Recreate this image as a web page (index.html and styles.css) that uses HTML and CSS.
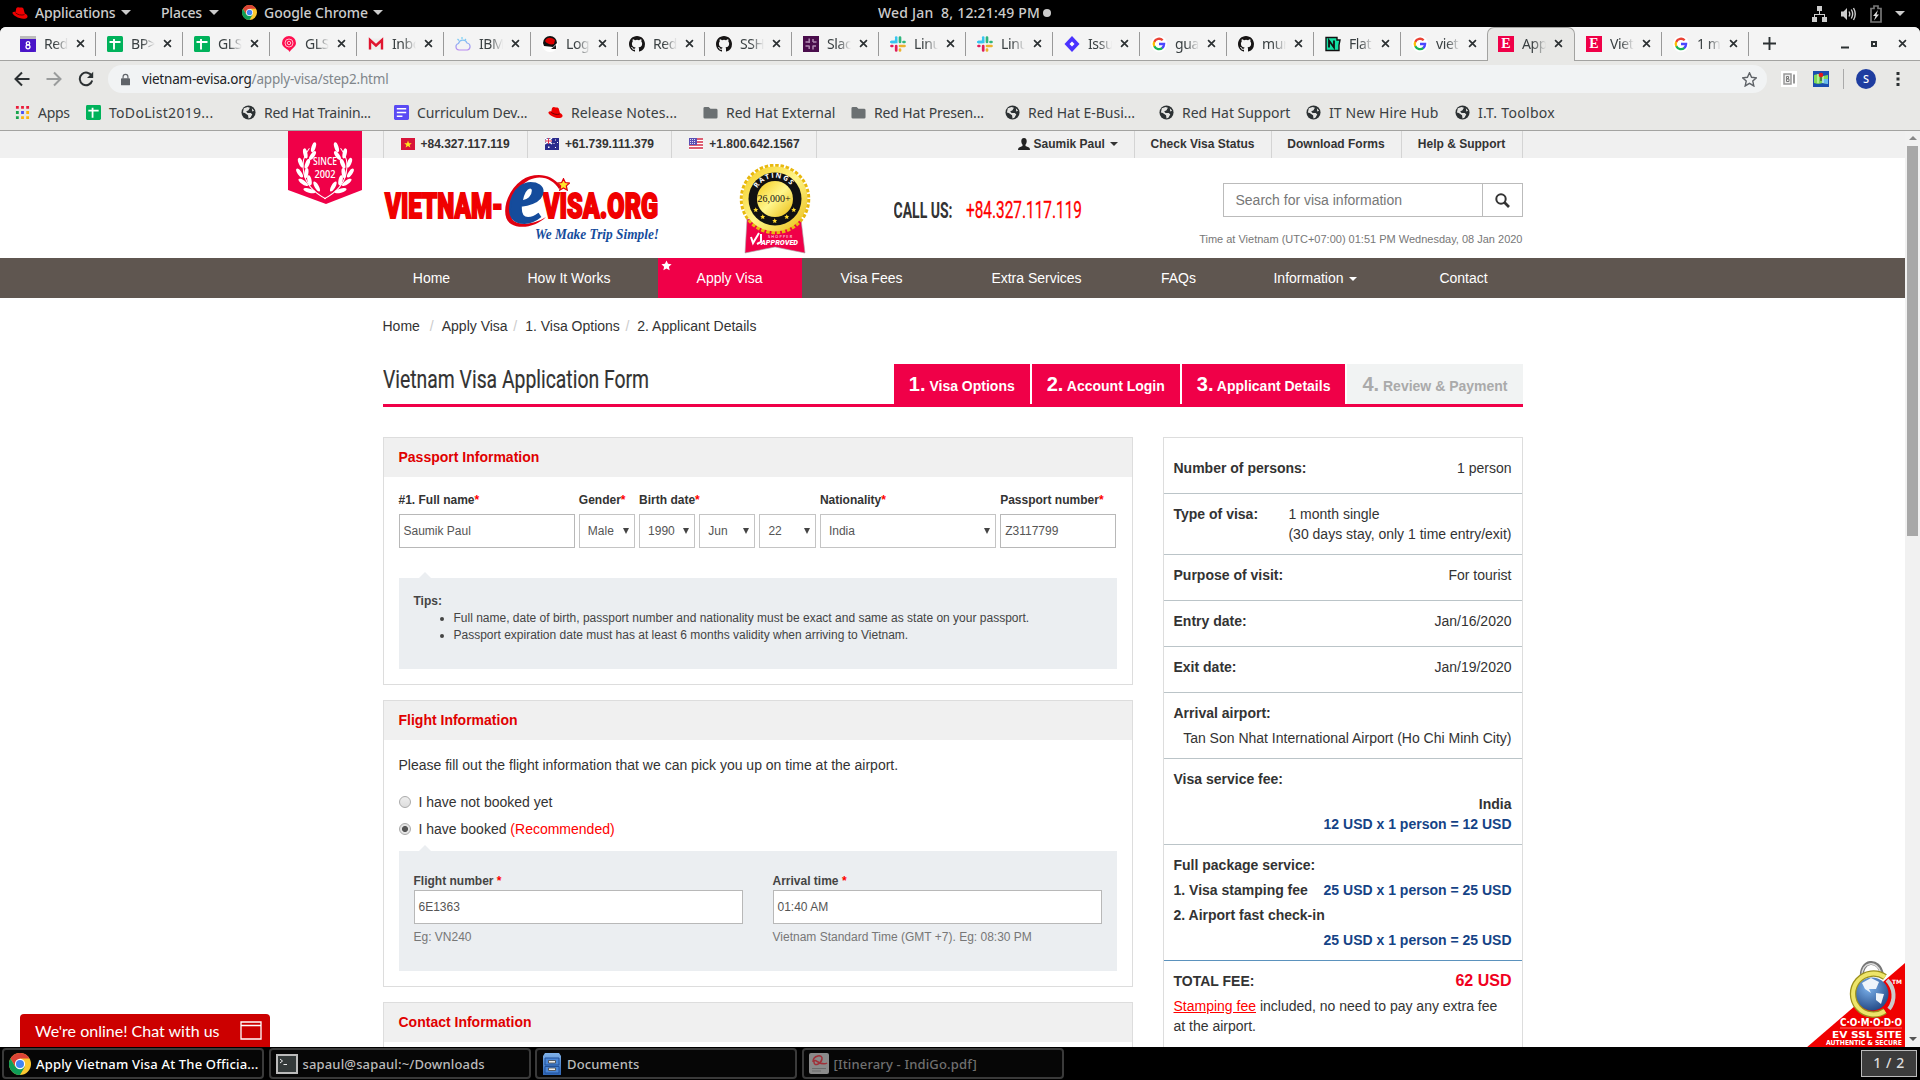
FILE: index.html
```html
<!DOCTYPE html>
<html lang="en">
<head>
<meta charset="utf-8">
<title>Apply Vietnam Visa At The Official Site</title>
<link rel="stylesheet" href="styles.css">
</head>
<body>
<svg class="defs" width="0" height="0" aria-hidden="true">
  <defs>
    <linearGradient id="gold" x1="0" y1="0" x2="1" y2="1"><stop offset="0" stop-color="#f4cb1c"/><stop offset=".5" stop-color="#fff68c"/><stop offset="1" stop-color="#e9b90c"/></linearGradient>
    <linearGradient id="cab" x1="0" y1="0" x2="0" y2="1"><stop offset="0" stop-color="#7fb2ea"/><stop offset="1" stop-color="#2e65b4"/></linearGradient>
    <linearGradient id="rb" x1="0" y1="0" x2="0" y2="1"><stop offset="0" stop-color="#6fd6f5"/><stop offset="1" stop-color="#b98af0"/></linearGradient>
    <radialGradient id="globeg" cx=".4" cy=".3" r=".8"><stop offset="0" stop-color="#7db4ee"/><stop offset="1" stop-color="#1c3f7c"/></radialGradient>
    <symbol id="i-chrome" viewBox="0 0 24 24"><circle cx="12" cy="12" r="12" fill="#fbc831"/><path d="M1.6 6A12 12 0 0 1 22.4 6H12L7 15Z" fill="#db4437"/><path d="M1.6 6A12 12 0 0 0 12 24L17.2 15 12 12 6.8 15Z" fill="#0f9d58"/><circle cx="12" cy="12" r="5.6" fill="#fff"/><circle cx="12" cy="12" r="4.4" fill="#4285f4"/></symbol>
    <symbol id="i-hat" viewBox="0 0 16 16"><path d="M4.3 3.2C6 1.4 7 2.6 8.300 2.600S10.500 2.200 11.400 3.600L12.800 8.400C15 9.400 16 10.800 15.400 12.200 14 14.800 7.600 14 4 11.600 1.600 10.200 0 8.600.5 7.600 1 6.700 2.400 6.600 3.500 6.900Z" fill="#e00"/><path d="M3.400 7.600C5 9.600 9.500 10.800 12.500 9.600" stroke="#500" stroke-width=".9" fill="none"/></symbol>
    <symbol id="i-cal" viewBox="0 0 16 16"><path d="M0 1H16V16H0Z" fill="#5b34d0"/><path d="M0 0H16V3H0Z" fill="#bbb" /><path d="M0 3H16V14L14 16H2L0 14Z" fill="#4a14c8"/><circle cx="8" cy="7.300" r="1.700" fill="none" stroke="#fff" stroke-width="1.300"/><circle cx="8" cy="10.800" r="2" fill="none" stroke="#fff" stroke-width="1.300"/></symbol>
    <symbol id="i-sheet" viewBox="0 0 16 16"><rect width="16" height="16" rx="1.500" fill="#00b25b"/><path d="M2.500 6H13.500M7 3V13.500" stroke="#fff" stroke-width="1.900"/></symbol>
    <symbol id="i-at" viewBox="0 0 16 16"><path d="M8 0A7 7 0 0 1 15 7C15 11 11 12 8.500 16 8 13 1 12 1 7A7 7 0 0 1 8 0Z" fill="#ff1050"/><circle cx="8" cy="7" r="4" fill="none" stroke="#ffb6c8"/><circle cx="8" cy="7" r="1.700" fill="none" stroke="#ffb6c8"/></symbol>
    <symbol id="i-gmail" viewBox="0 0 16 16"><path d="M1 2.500H15V13.500H1Z" fill="#eee"/><path d="M2 13.500V4L8 9.500 14 4V13.500" fill="none" stroke="#e0152f" stroke-width="2.400"/></symbol>
    <symbol id="i-cloud" viewBox="0 0 16 16"><path d="M4 14A3.300 3.300 0 0 1 3.500 7.500 4.500 4.500 0 0 1 12 7 3.600 3.600 0 0 1 12.500 14ZM7 1V3M2.500 3 4 4.500M11 3 10 4" fill="none" stroke="url(#rb)" stroke-width="1.200"/></symbol>
    <symbol id="i-login" viewBox="0 0 16 16"><circle cx="8" cy="8" r="8" fill="#fff"/><path d="M1 7A7 7 0 0 1 15 7L11 11 2 10Z" fill="#111"/><path d="M3 5C5 1 9 1 13 4L12 8C9 9 5 8 3 5Z" fill="#d00"/><path d="M9 13 14 9V13Z" fill="#222"/></symbol>
    <symbol id="i-github" viewBox="0 0 16 16"><path fill="#171515" fill-rule="evenodd" d="M8 0C3.580 0 0 3.580 0 8c0 3.540 2.290 6.530 5.470 7.590.4.070.55-.17.55-.38v-1.490c-2.010.37-2.530-.49-2.690-.94-.09-.23-.48-.94-.82-1.130-.28-.15-.68-.52-.01-.53.63-.01 1.080.58 1.230.82.720 1.210 1.870.87 2.330.66.070-.52.28-.87.510-1.070-1.780-.2-3.640-.89-3.640-3.950 0-.87.31-1.590.82-2.150-.08-.2-.36-1.020.08-2.120 0 0 .67-.21 2.200.82a7.600 7.600 0 0 1 4 0c1.530-1.040 2.200-.82 2.200-.82.440 1.100.160 1.920.080 2.120.510.560.820 1.270.820 2.150 0 3.070-1.870 3.750-3.650 3.950.290.250.540.730.540 1.480v2.200c0 .21.150.46.550.38A8 8 0 0 0 16 8c0-4.420-3.580-8-8-8z"/></symbol>
    <symbol id="i-slack" viewBox="0 0 16 16"><g stroke-width="2.700" stroke-linecap="round" fill="none"><path d="M1.500 6H5M6.200 1.500V2" stroke="#36c5f0"/><path d="M6.200 3.500V6H1.500" stroke="#36c5f0"/><path d="M10 1.500V6M13.500 6H14.500" stroke="#2eb67d"/><path d="M6.200 10V14.500M1.500 10H2.300" stroke="#e01e5a"/><path d="M10 10H14.500M10 13.500V14.500" stroke="#ecb22e"/></g></symbol>
    <symbol id="i-slackp" viewBox="0 0 16 16"><path d="M0 0H16V16H0Z" fill="#4a0d4c"/><path d="M6.200 2.500V7M2.500 6H6M10 3V6M10 6H13.500M6 10H2.500M6.200 9.500V13M10 9.500V13.500M10 10H13" stroke="#b08ab1" stroke-width="1.500"/></symbol>
    <symbol id="i-jira" viewBox="0 0 16 16"><path d="M8 0 15.500 8 8 16 .5 8Z" fill="#4a32ff"/><path d="M8 5.500 10.500 8 8 10.500 5.500 8Z" fill="#fff"/></symbol>
    <symbol id="i-google" viewBox="0 0 16 16"><circle cx="8" cy="8" r="8" fill="#fff"/><g fill="none" stroke-width="2.300"><path d="M3.200 6A5.200 5.200 0 0 1 11.700 4.300" stroke="#ea4335"/><path d="M3.400 10.500A5.200 5.200 0 0 1 3.200 5.700" stroke="#fbbc05"/><path d="M11.500 11.800A5.200 5.200 0 0 1 3.300 10.300" stroke="#18b355"/><path d="M8 8H13.100A5.200 5.200 0 0 1 11.200 12" stroke="#4b47ff"/></g></symbol>
    <symbol id="i-n" viewBox="0 0 16 16"><path d="M1 1.500H12V4H15L14 9V14.500H1Z" fill="#13e2a5" stroke="#111" stroke-width="1.400"/><path d="M4 11.500V4.500L9 11.500V4.500" fill="none" stroke="#111" stroke-width="1.800"/></symbol>
    <symbol id="i-globe" viewBox="0 0 16 16"><circle cx="8" cy="8" r="7.500" fill="#2c3133"/><path d="M3 3.500 7 2 9.500 3 8 5.500 5.500 7 7 8.500H10.500L12 10 10 13.500 8 14.500 7.500 11 4 8.500 2 8ZM11.500 3.500 14 6 12 7Z" fill="#e4e4e2"/></symbol>
    <symbol id="i-doc" viewBox="0 0 16 16"><rect width="16" height="16" rx="1.500" fill="#5a4af4"/><path d="M3 4H13M3 8H13M3 12H9" stroke="#fff" stroke-width="1.700"/></symbol>
    <symbol id="i-folder" viewBox="0 0 16 16"><path d="M.5 3.500Q.5 2 2 2H6L8 4H14Q15.500 4 15.500 5.500V13Q15.500 14.500 14 14.500H2Q.5 14.500.5 13Z" fill="#6b7072"/></symbol>
    <symbol id="i-apps" viewBox="0 0 16 16"><path d="M1 1h3v3H1zM6.500 1h3v3h-3zM12 1h3v3h-3z" fill="#ea1c3a"/><path d="M1 6.500h3v3H1zM1 12h3v3H1z" fill="#17a34c"/><path d="M6.500 6.500h3v3h-3z" fill="#4a50f5"/><path d="M12 6.500h3v3h-3zM6.500 12h3v3h-3zM12 12h3v3h-3z" fill="#fbb40c"/></symbol>
    <symbol id="i-x" viewBox="0 0 10 10"><path d="M1.200 1.200 8.800 8.800M8.800 1.200 1.200 8.800" stroke="#2c3133" stroke-width="1.900"/></symbol>
    <symbol id="i-star" viewBox="0 0 16 16"><path d="M8 .8 10.200 5.600 15.400 6.200 11.500 9.700 12.600 14.900 8 12.200 3.400 14.900 4.500 9.700.6 6.200 5.800 5.600Z"/></symbol>
    <symbol id="leaf" viewBox="0 0 30 56"><g fill="#fff"><ellipse cx="17" cy="5" rx="2" ry="5" transform="rotate(18 17 5)"/><ellipse cx="9" cy="11" rx="2" ry="5" transform="rotate(-12 9 11)"/><ellipse cx="16" cy="13" rx="2" ry="5" transform="rotate(35 16 13)"/><ellipse cx="4.500" cy="20" rx="2" ry="5" transform="rotate(-22 4.500 20)"/><ellipse cx="11" cy="21" rx="2" ry="5" transform="rotate(22 11 21)"/><ellipse cx="3.500" cy="30" rx="2" ry="5" transform="rotate(-35 3.500 30)"/><ellipse cx="10" cy="30" rx="2" ry="5" transform="rotate(8 10 30)"/><ellipse cx="7" cy="39" rx="2" ry="5.500" transform="rotate(-55 7 39)"/><ellipse cx="13" cy="37" rx="2" ry="5" transform="rotate(-12 13 37)"/><ellipse cx="13" cy="47" rx="2" ry="6" transform="rotate(-75 13 47)"/><ellipse cx="20" cy="43" rx="2" ry="5.500" transform="rotate(-30 20 43)"/></g><path d="M13 6C3 18 3 42 29 55" fill="none" stroke="#fff" stroke-width="1"/></symbol>
  </defs>
</svg>

<header class="panel">
  <div class="panel-left">
    <svg class="p-hat"><use href="#i-hat"/></svg><span class="pl1">Applications</span><i class="tri"></i>
    <span class="pl2">Places</span><i class="tri"></i>
    <svg class="p-chrome"><use href="#i-chrome"/></svg><span class="pl3">Google Chrome</span><i class="tri"></i>
  </div>
  <div class="clock">Wed Jan&nbsp; 8, 12:21:49 PM<i></i></div>
  <div class="tray">
    <svg width="15" height="16" viewBox="0 0 15 16" fill="#ccc"><path d="M5 0h5v5H5zM0 11h5v5H0zM10 11h5v5h-5zM7 5h1v3h5v3h-1V9H3v2H2V8h5z"/></svg>
    <svg width="17" height="16" viewBox="0 0 17 16"><path d="M1 5.500H3.500L7 2V14L3.500 10.500H1Z" fill="#ccc"/><path d="M9 5.500Q10.500 8 9 10.500M11.300 3.500Q14 8 11.300 12.500M13.500 2Q17 8 13.500 14" stroke="#ccc" stroke-width="1.400" fill="none"/></svg>
    <svg width="12" height="18" viewBox="0 0 12 18"><path d="M1 3.500H4V1H8V3.500H11V17H1Z" fill="none" stroke="#777" stroke-width="1.700"/><path d="M8 5 3 11H5.500L4 15.500 9 9.500H6.500Z" fill="#ddd"/></svg>
    <i class="tri"></i>
  </div>
</header>

<section class="browser">
  <div class="tabs">
    <div class="tab"><svg><use href="#i-cal"/></svg><span>Red</span><svg class="x"><use href="#i-x"/></svg></div>
    <div class="tab"><svg><use href="#i-sheet"/></svg><span>BP&gt;</span><svg class="x"><use href="#i-x"/></svg></div>
    <div class="tab"><svg><use href="#i-sheet"/></svg><span>GLS</span><svg class="x"><use href="#i-x"/></svg></div>
    <div class="tab"><svg><use href="#i-at"/></svg><span>GLS</span><svg class="x"><use href="#i-x"/></svg></div>
    <div class="tab"><svg><use href="#i-gmail"/></svg><span>Inbo</span><svg class="x"><use href="#i-x"/></svg></div>
    <div class="tab"><svg><use href="#i-cloud"/></svg><span>IBM</span><svg class="x"><use href="#i-x"/></svg></div>
    <div class="tab"><svg><use href="#i-login"/></svg><span>Log</span><svg class="x"><use href="#i-x"/></svg></div>
    <div class="tab"><svg><use href="#i-github"/></svg><span>Red</span><svg class="x"><use href="#i-x"/></svg></div>
    <div class="tab"><svg><use href="#i-github"/></svg><span>SSH</span><svg class="x"><use href="#i-x"/></svg></div>
    <div class="tab"><svg><use href="#i-slackp"/></svg><span>Slac</span><svg class="x"><use href="#i-x"/></svg></div>
    <div class="tab"><svg><use href="#i-slack"/></svg><span>Linu</span><svg class="x"><use href="#i-x"/></svg></div>
    <div class="tab"><svg><use href="#i-slack"/></svg><span>Linu</span><svg class="x"><use href="#i-x"/></svg></div>
    <div class="tab"><svg><use href="#i-jira"/></svg><span>Issu</span><svg class="x"><use href="#i-x"/></svg></div>
    <div class="tab"><svg><use href="#i-google"/></svg><span>gua</span><svg class="x"><use href="#i-x"/></svg></div>
    <div class="tab"><svg><use href="#i-github"/></svg><span>mur</span><svg class="x"><use href="#i-x"/></svg></div>
    <div class="tab"><svg><use href="#i-n"/></svg><span>Flat</span><svg class="x"><use href="#i-x"/></svg></div>
    <div class="tab before"><svg><use href="#i-google"/></svg><span>viet</span><svg class="x"><use href="#i-x"/></svg></div>
    <div class="tab active"><b class="fav-e">E</b><span>App</span><svg class="x"><use href="#i-x"/></svg></div>
    <div class="tab"><b class="fav-e">E</b><span>Viet</span><svg class="x"><use href="#i-x"/></svg></div>
    <div class="tab"><svg><use href="#i-google"/></svg><span>1 m</span><svg class="x"><use href="#i-x"/></svg></div>
    <svg class="plus" viewBox="0 0 13 13"><path d="M6.500 0V13M0 6.500H13" stroke="#2c3133" stroke-width="1.900"/></svg>
    <div class="winbtns">
      <svg width="10" height="10"><path d="M1 8.500H9" stroke="#2c3133" stroke-width="2.200"/></svg>
      <svg width="8" height="8"><path d="M2 2H6V6H2Z" fill="none" stroke="#2c3133" stroke-width="2"/></svg>
      <svg class="x"><use href="#i-x"/></svg>
    </div>
  </div>
  <div class="toolbar">
    <svg width="16" height="16" viewBox="0 0 16 16"><path d="M15.500 8H2M8 1.500 1.500 8 8 14.500" fill="none" stroke="#2c3133" stroke-width="2"/></svg>
    <svg width="16" height="16" viewBox="0 0 16 16"><path d="M.5 8H14M8 1.500 14.500 8 8 14.500" fill="none" stroke="#9a9c9c" stroke-width="2"/></svg>
    <svg width="16" height="16" viewBox="0 0 16 16"><path d="M13.800 5.200A6.300 6.300 0 1 0 14.200 9.500" fill="none" stroke="#2c3133" stroke-width="2"/><path d="M15.200.8V7H9Z" fill="#2c3133"/></svg>
    <div class="url">
      <svg width="9" height="13" viewBox="0 0 10 13"><path d="M1 5H9Q10 5 10 6V12Q10 13 9 13H1Q0 13 0 12V6Q0 5 1 5Z" fill="#5f6368"/><path d="M2.300 5.500V3.500A2.700 2.700 0 0 1 7.700 3.500V5.500" fill="none" stroke="#5f6368" stroke-width="1.300"/></svg>
      <span>vietnam-evisa.org<em>/apply-visa/step2.html</em></span>
      <svg class="fav" width="15" height="15"><use href="#i-star" fill="none" stroke="#5f6368" stroke-width="1.500"/></svg>
    </div>
    <div class="exts">
      <svg width="16" height="16" viewBox="0 0 16 16"><path d="M0 0H16V16H0Z" fill="#fff"/><path d="M3 3H10V13H3Z" fill="#eee" stroke="#999" stroke-width="1.500"/><path d="M13 3.500V12.500" stroke="#999" stroke-width="2"/><path d="M5.500 5.500H7.500V7.500H5.500ZM5.500 8H8V10.500H5.500Z" fill="none" stroke="#777"/></svg>
      <svg width="16" height="16" viewBox="0 0 16 16"><path d="M0 0H16V16H0Z" fill="#1b4db0"/><path d="M1 4 5 3 10 5 15 4V13L10 12 5 13 1 12Z" fill="#7dd957"/><path d="M9 8H15V13L9 12Z" fill="#67b9f0"/><path d="M5 3V12M10 5V12" stroke="#eaffd0"/><path d="M8 10V5" stroke="#222"/><circle cx="8" cy="4" r="2.300" fill="#e21b1b"/></svg>
      <i class="bar"></i>
      <b class="avatar">S</b>
      <svg width="4" height="16"><path d="M.5 1h3v3h-3zM.5 6.500h3v3h-3zM.5 12h3v3h-3z" fill="#2c3133"/></svg>
    </div>
  </div>
  <nav class="bookmarks">
    <a><svg><use href="#i-apps"/></svg>Apps</a>
    <a class="w4"><svg><use href="#i-sheet"/></svg>ToDoList2019...</a>
    <a><svg><use href="#i-globe"/></svg>Red Hat Trainin...</a>
    <a class="w1"><svg><use href="#i-doc"/></svg>Curriculum Dev...</a>
    <a class="w3"><svg><use href="#i-hat"/></svg>Release Notes...</a>
    <a class="w2"><svg><use href="#i-folder"/></svg>Red Hat External</a>
    <a class="w1"><svg><use href="#i-folder"/></svg>Red Hat Presen...</a>
    <a class="w2"><svg><use href="#i-globe"/></svg>Red Hat E-Busi...</a>
    <a class="w2"><svg><use href="#i-globe"/></svg>Red Hat Support</a>
    <a class="w3"><svg><use href="#i-globe"/></svg>IT New Hire Hub</a>
    <a class="w4"><svg><use href="#i-globe"/></svg>I.T. Toolbox</a>
  </nav>
</section>

<div class="viewport">
<main class="page">
  <div class="topbar">
    <div class="container">
      <span class="phone"><svg width="14" height="12"><path d="M0 0H14V12H0Z" fill="#d8143a"/><path d="M7 2.500 8 5.200H10.800L8.600 6.900 9.400 9.600 7 8 4.600 9.600 5.400 6.900 3.200 5.200H6Z" fill="#ffe81c"/></svg>+84.327.117.119</span>
      <span class="phone"><svg width="14" height="12"><path d="M0 0H14V12H0Z" fill="#2a2a8c"/><path d="M0 0 7 6M7 0 0 6M3.500 0V6M0 3H7" stroke="#fff" stroke-width="1.500"/><path d="M3.500 0V6M0 3H7" stroke="#e02040" stroke-width=".9"/><path d="M3 8.500h1.500v1.500H3zM10 1.500h1v1h-1zM8.500 5h1v1h-1zM12 4h1v1h-1zM10 9h1v1h-1z" fill="#fff"/></svg>+61.739.111.379</span>
      <span class="phone"><svg width="14" height="12"><path d="M0 0H14V12H0Z" fill="#fff"/><path d="M0 1H14M0 4H14M0 7H14M0 10H14" stroke="#d22b45" stroke-width="1.500"/><path d="M0 0H8V7H0Z" fill="#5a4fb4"/><path d="M1 1.500H7M1 3.500H7M1 5.500H7" stroke="#fff" stroke-width=".8" stroke-dasharray="1 1"/></svg>+1.800.642.1567</span>
      <span class="user"><svg width="12" height="12" viewBox="0 0 12 12"><path d="M6 0C8 0 8.800 1.500 8.700 3.500 8.600 5 8 6 7.500 6.700V8L11 9.500Q12 10 12 12H0Q0 10 1 9.500L4.500 8V6.700C4 6 3.400 5 3.300 3.500 3.200 1.500 4 0 6 0Z" fill="#222"/></svg>Saumik Paul<i class="caret"></i></span>
      <span class="tl t1">Check Visa Status</span><span class="tl t2">Download Forms</span><span class="tl t3">Help &amp; Support</span>
    </div>
    <svg class="ribbon" width="74" height="73" viewBox="0 0 74 73"><path d="M0 0H74V59L38 73 0 59Z" fill="#f00048"/><use href="#leaf" x="8" y="11" width="31" height="58"/><use href="#leaf" x="8" y="11" width="31" height="58" transform="matrix(-1 0 0 1 74 0)"/><g fill="#fff" font-family="Open Sans, sans-serif" font-size="10" font-weight="600"><text x="25" y="34" textLength="24" lengthAdjust="spacingAndGlyphs">SINCE</text><text x="26.500" y="46.500" textLength="21" lengthAdjust="spacingAndGlyphs">2002</text></g></svg>
  </div>

  <div class="container masthead">
    <svg class="logo" width="284" height="75" viewBox="0 0 284 75">
      <g font-family="Roboto, sans-serif" font-weight="900" font-size="34.500" fill="#f00000" stroke="#f00000" stroke-width="2"><text x="2" y="43" textLength="118" lengthAdjust="spacingAndGlyphs">VIETNAM-</text><text x="160" y="43" textLength="115" lengthAdjust="spacingAndGlyphs">VISA.ORG</text></g>
      <path d="M178 12C168-3 150-2 139 5 122 17 117 42 128 49 138 55 154 51 163 42 152 49 138 51 131 46 122 38 130 14 146 5 158-1 170 4 176 14Z" fill="#e00010"/>
      <text x="125" y="46.500" font-family="Liberation Serif, serif" font-style="italic" font-weight="700" font-size="82" fill="#154c9c" stroke="#154c9c" stroke-width="2">e</text>
      <use href="#i-star" x="174" y="3" width="13" height="13" fill="#ffe62b" stroke="#e00010" stroke-width="1.500"/>
      <text x="152" y="64" font-family="Liberation Serif, serif" font-style="italic" font-weight="700" font-size="14.500" fill="#154c9c" textLength="124" lengthAdjust="spacingAndGlyphs">We Make Trip Simple!</text>
    </svg>
    <svg class="badge" width="72" height="90" viewBox="0 0 72 90">
      <path d="M8 55H62L66 89 36 83 6 89Z" fill="#f00048" stroke="#aaa" stroke-width=".6"/>
      <circle cx="36" cy="35" r="33.500" fill="none" stroke="#e8b80e" stroke-width="3.500" stroke-dasharray="3.500 1.760"/>
      <circle cx="36" cy="35" r="32.500" fill="url(#gold)"/><circle cx="36" cy="35" r="26.500" fill="#111"/><circle cx="36" cy="35" r="18" fill="url(#gold)"/>
      <path id="arc" d="M16.500 28A20.500 20.500 0 0 1 55.500 28" fill="none"/>
      <text font-family="Open Sans, sans-serif" font-size="7" font-weight="700" fill="#fff" letter-spacing="1.500"><textPath href="#arc" startOffset="4">RATINGS</textPath></text>
      <text x="18.500" y="37.500" font-family="Liberation Serif, serif" font-size="10" textLength="33" lengthAdjust="spacingAndGlyphs" fill="#111">26,000+</text>
      <g fill="#ffd92b"><use href="#i-star" x="14" y="43" width="5.500" height="5.500"/><use href="#i-star" x="21" y="50" width="5.500" height="5.500"/><use href="#i-star" x="33" y="54" width="5.500" height="5.500"/><use href="#i-star" x="45" y="50" width="5.500" height="5.500"/><use href="#i-star" x="52" y="43" width="5.500" height="5.500"/></g>
      <path d="M12 73 14 79 20 69M18 80 22 78 22 70" stroke="#fff" stroke-width="2" fill="none"/><text x="29" y="74" font-family="Open Sans, sans-serif" font-size="3.800" fill="#fff" textLength="24">SHOPPER</text><text x="22" y="81" font-family="Roboto, sans-serif" font-style="italic" font-weight="900" font-size="8" fill="#fff" textLength="37" lengthAdjust="spacingAndGlyphs">APPROVED</text>
    </svg>
    <svg class="call" width="190" height="30" viewBox="0 0 190 30"><g font-family="Roboto, sans-serif"><text x="-.5" y="22" font-size="22" font-weight="700" fill="#333" textLength="59" lengthAdjust="spacingAndGlyphs">CALL US:</text><text x="72" y="22" font-size="23.500" fill="#f00" stroke="#f00" stroke-width=".3" textLength="116" lengthAdjust="spacingAndGlyphs">+84.327.117.119</text></g></svg>
    <div class="finder">
      <div class="search"><span>Search for visa information</span><b><svg width="15" height="15" viewBox="0 0 15 15"><circle cx="6" cy="6" r="4.700" fill="none" stroke="#333" stroke-width="2"/><path d="M9.300 9.300 14 14" stroke="#333" stroke-width="2.700"/></svg></b></div>
      <p>Time at Vietnam (UTC+07:00) 01:51 PM Wednesday, 08 Jan 2020</p>
    </div>
  </div>

  <nav class="mainnav"><div class="container">
    <a>Home</a><a>How It Works</a><a class="on"><svg class="navstar" width="11" height="11"><use href="#i-star" fill="#fff"/></svg>Apply Visa</a><a>Visa Fees</a><a>Extra Services</a><a>FAQs</a><a>Information<i class="caret"></i></a><a>Contact</a>
  </div></nav>

  <div class="container crumbs"><span>Home</span><i class="c1">/</i><span>Apply Visa</span><i class="c2">/</i><span>1. Visa Options</span><i class="c2">/</i><span>2. Applicant Details</span></div>

  <div class="container">
    <div class="formhead">
      <svg width="270" height="40" viewBox="0 0 270 40"><text x="0" y="23.500" font-family="Roboto, sans-serif" font-size="26.500" fill="#333" stroke="#333" stroke-width=".2" textLength="266" lengthAdjust="spacingAndGlyphs">Vietnam Visa Application Form</text></svg>
      <div class="steps"><span><b>1.</b> Visa Options</span><span><b>2.</b> Account Login</span><span><b>3.</b> Applicant Details</span><span class="off"><b>4.</b> Review &amp; Payment</span></div>
    </div>
  </div>

  <div class="container cols">
    <div class="left">
      <section class="card">
        <h3>Passport Information</h3>
        <div class="body">
          <div class="fields">
            <div class="f1"><label>#1. Full name<i>*</i></label><div class="inp">Saumik Paul</div></div>
            <div class="f2"><label>Gender<i>*</i></label><div class="sel">Male<i></i></div></div>
            <div class="f3"><label>Birth date<i>*</i></label><div class="trio"><div class="sel">1990<i></i></div><div class="sel">Jun<i></i></div><div class="sel">22<i></i></div></div></div>
            <div class="f1"><label>Nationality<i>*</i></label><div class="sel">India<i></i></div></div>
            <div class="f4"><label>Passport number<i>*</i></label><div class="inp">Z3117799</div></div>
          </div>
          <div class="tip"><b>Tips:</b><ul><li>Full name, date of birth, passport number and nationality must be exact and same as state on your passport.</li><li>Passport expiration date must has at least 6 months validity when arriving to Vietnam.</li></ul></div>
        </div>
      </section>
      <section class="card">
        <h3>Flight Information</h3>
        <div class="body flight">
          <p>Please fill out the flight information that we can pick you up on time at the airport.</p>
          <div class="radio"><i></i>I have not booked yet</div>
          <div class="radio"><i class="sel-on"></i><span>I have booked <em>(Recommended)</em></span></div>
          <div class="tip two">
            <div><label>Flight number <i>*</i></label><div class="inp">6E1363</div><small>Eg: VN240</small></div>
            <div><label>Arrival time <i>*</i></label><div class="inp">01:40 AM</div><small>Vietnam Standard Time (GMT +7). Eg: 08:30 PM</small></div>
          </div>
        </div>
      </section>
      <section class="card"><h3>Contact Information</h3><div class="body"></div></section>
    </div>
    <aside class="side">
      <div class="row first"><p><b>Number of persons:</b><span>1 person</span></p></div>
      <div class="row dbl"><p><b>Type of visa:</b><span>1 month single<br>(30 days stay, only 1 time entry/exit)</span></p></div>
      <div class="row"><p><b>Purpose of visit:</b><span>For tourist</span></p></div>
      <div class="row"><p><b>Entry date:</b><span>Jan/16/2020</span></p></div>
      <div class="row"><p><b>Exit date:</b><span>Jan/19/2020</span></p></div>
      <div class="row tight"><p><b>Arrival airport:</b></p><p class="r">Tan Son Nhat International Airport (Ho Chi Minh City)</p></div>
      <div class="row tight"><p><b>Visa service fee:</b></p><p class="r"><span><b>India</b><br><b class="fee">12 USD x 1 person = 12 USD</b></span></p></div>
      <div class="row tight total-line"><p><b>Full package service:</b></p><p><b>1. Visa stamping fee</b><b class="fee">25 USD x 1 person = 25 USD</b></p><p><b>2. Airport fast check-in</b></p><p class="r"><b class="fee">25 USD x 1 person = 25 USD</b></p></div>
      <div class="row tight last"><p><b>TOTAL FEE:</b><b class="total">62 USD</b></p><p class="note"><span><u>Stamping fee</u> included, no need to pay any extra fee<br>at the airport.</span></p></div>
    </aside>
  </div>
</main>
<div class="scroll"><i class="up"></i><i class="thumb"></i><i class="down"></i></div>
<div class="chat">We're online! Chat with us<svg width="22" height="19"><path d="M1 1H21V18H1ZM1 4.500H21" fill="none" stroke="#fff" stroke-width="1.300"/></svg></div>
<svg class="comodo" width="100" height="88" viewBox="0 0 100 88">
  <path d="M1 88 100 3V88Z" fill="#f00000"/>
  <path d="M57 18C55 0 74-3 77 15" fill="none" stroke="#777" stroke-width="4"/><path d="M57 16C56 2 72-1 76 13" fill="none" stroke="#ddd" stroke-width="1.500"/>
  <path d="M82 20A22 22 0 0 1 84 49" fill="none" stroke="#ccc" stroke-width="4"/>
  <circle cx="67" cy="34" r="16.500" fill="url(#globeg)"/><path d="M57 23 66 18 74 22 71 29 64 29 66 33 60 29ZM71 33 79 34 76 44 71 40Z" fill="#eef4fa"/>
  <path d="M80 17A20.500 20.500 0 1 0 80 51" fill="none" stroke="#9b8f1c" stroke-width="6.500"/><path d="M80 17A20.500 20.500 0 1 0 80 51" fill="none" stroke="#eee56a" stroke-width="4"/>
  <g fill="#fff" font-family="DejaVu Sans, sans-serif" font-weight="700"><text x="87" y="24" font-size="6" textLength="10" lengthAdjust="spacingAndGlyphs">TM</text><text x="35" y="66" font-size="10" textLength="62" lengthAdjust="spacingAndGlyphs">C·O·M·O·D·O</text><text x="27" y="77.500" font-size="9.500" textLength="70" lengthAdjust="spacingAndGlyphs">EV SSL SITE</text><text x="21" y="85" font-size="6.800" textLength="76" lengthAdjust="spacingAndGlyphs">AUTHENTIC &amp; SECURE</text></g><path d="M35 68H97" stroke="#ff8080" stroke-width=".8"/>
</svg>
</div>

<footer class="taskbar">
  <div class="task cur"><svg width="22" height="22"><use href="#i-chrome"/></svg><span>Apply Vietnam Visa At The Officia...</span></div>
  <div class="task"><svg width="22" height="20"><path d="M1 1H21V19H1Z" fill="#343a3a" stroke="#bbb" stroke-width="2"/><path d="M4 5 6.500 7 4 9M7.500 10.500H11" fill="none" stroke="#eee"/></svg><span>sapaul@sapaul:~/Downloads</span></div>
  <div class="task"><svg width="20" height="22"><path d="M1 3 3 0H17L19 3V22H1Z" fill="url(#cab)"/><path d="M3 5H17V12H3ZM3 13.500H17V20H3Z" fill="#4a86d6" stroke="#20509a"/><path d="M6.500 7.500H13.500V10H6.500ZM6.500 15H13.500V17.500H6.500Z" fill="#eee" stroke="#444" stroke-width=".8"/></svg><span>Documents</span></div>
  <div class="task min"><svg width="20" height="21"><rect width="20" height="21" rx="2" fill="#8a8a8a"/><path d="M4 9C4 2 14 1 13 6S5 14 5 9 12 14 18 10" fill="none" stroke="#a03038" stroke-width="1.500"/><path d="M3 15.500H17M3 18H12" stroke="#6a6a6a"/></svg><span>[Itinerary - IndiGo.pdf]</span></div>
  <div class="pager">1 / 2</div>
</footer>
</body>
</html>
```

FILE: styles.css
```css
* { box-sizing: border-box; }
html, body { margin: 0; height: 1080px; overflow: hidden; background: #000; }
body { display: flex; flex-direction: column; font-family: "Liberation Sans", Arial, sans-serif; font-size: 14px; line-height: 20px; color: #333; }
p, h3, ul { margin: 0; }
i, em { font-style: normal; }
.defs { position: absolute; }
svg { display: block; flex: none; }

/* desktop panel */
.panel { height: 27px; flex: none; background: #000; color: #ccc; display: grid; grid-template-columns: 1fr auto 1fr; align-items: center; padding-bottom: 2px; font: 500 14px "Noto Sans", sans-serif; }
.panel-left { display: flex; align-items: center; white-space: nowrap; }
.p-hat { width: 16px; height: 16px; margin: 0 7px 0 12px; }
.p-chrome { width: 15px; height: 15px; margin: 0 7px 0 23px; }
.pl1 { width: 80px; letter-spacing: -.15px; }
.pl2 { width: 42px; margin-left: 30px; letter-spacing: -.2px; }
.pl3 { width: 103px; letter-spacing: -.05px; }
.tri { border: 5px solid transparent; border-top-color: #ccc; border-bottom: 0; margin-left: 6px; }
.clock { display: flex; align-items: center; letter-spacing: .2px; white-space: nowrap; margin-left: 9px; }
.clock i { width: 8px; height: 8px; border-radius: 4px; background: #ccc; margin-left: 3px; }
.tray { display: flex; align-items: center; justify-content: flex-end; gap: 13px; padding: 2px 15px 0 0; }
.tray .tri { margin-left: 0; }

/* browser chrome */
.browser { height: 104px; flex: none; background: #e8e8e6; font-family: "Noto Sans", sans-serif; color: #3a4042; border-bottom: 1px solid #a3a3a1; border-radius: 6px 6px 0 0; overflow: hidden; }
.tabs { height: 34px; display: flex; align-items: center; padding-left: 9px; background: #f4f4f4; border-bottom: 1px solid #a3a3a1; }
.tab { width: 87px; height: 24px; flex: none; display: flex; align-items: center; padding-left: 11px; border-right: 1px solid #999; }
.tab > svg:first-child, .fav-e { width: 16px; height: 16px; flex: none; }
.tab span { width: 24px; margin: 0 8px; overflow: hidden; white-space: nowrap; font-size: 14px; letter-spacing: -.4px; -webkit-mask-image: linear-gradient(90deg, #000 45%, transparent); mask-image: linear-gradient(90deg, #000 45%, transparent); }
.x { width: 9px; height: 9px; }
.tab.before { border-right-color: transparent; }
.tab.active { height: 34px; align-self: flex-start; background: #e8e8e6; border: 1px solid #a3a3a1; border-bottom: 0; border-radius: 7px 7px 0 0; padding: 0 0 2px 10px; margin-left: -1px; width: 88px; }
.fav-e { background: #f00048; color: #fff; font: 700 14px/16px "Liberation Serif", serif; text-align: center; }
.plus { width: 13px; height: 13px; margin-left: 14px; }
.winbtns { margin-left: auto; padding-right: 13px; display: flex; align-items: center; gap: 20px; }
.toolbar { height: 36px; display: flex; align-items: center; padding: 0 17px 0 14px; gap: 16px; }
.toolbar > .url { height: 28px; width: 1659px; flex: none; margin-left: -2px; border-radius: 14px; background: #f1f3f4; display: flex; align-items: center; padding: 0 10px 0 13px; font-size: 13.500px; color: #202124; }
.url span { margin-left: 12px; letter-spacing: -.2px; }
.url em { color: #80868b; }
.fav { margin-left: auto; }
.exts { display: flex; align-items: center; gap: 16px; margin-left: -2px; }
.exts svg:nth-child(2) { margin-right: -2px; }
.bar { width: 1px; height: 20px; background: #aaa; }
.avatar { width: 20px; height: 20px; margin: 0 4px 0 -4px; border-radius: 50%; background: #1f3da0; color: #fff; font: 500 11px/20px "Noto Sans", sans-serif; text-align: center; }
.bookmarks { height: 31px; display: grid; grid-template-columns: 71px 155px 153px 154px 155px 148px 154px 154px 147px 149px 120px; align-items: center; padding-left: 15px; font-size: 14px; white-space: nowrap; letter-spacing: -.3px; }
.bookmarks a { display: flex; align-items: center; }
.bookmarks svg { width: 15px; height: 15px; margin-right: 8px; }
.w1 { letter-spacing: -.13px; }
.w2 { letter-spacing: -.03px; }
.w3 { letter-spacing: .12px; }
.w4 { letter-spacing: .3px; }

/* page area */
.viewport { height: 916px; flex: none; position: relative; display: flex; background: #fff; overflow: hidden; }
.page { width: 1905px; height: 916px; overflow: hidden; }
.container { width: 1140px; margin: 0 auto; }
.topbar { height: 27px; background: #f0f0f0; position: relative; font: 700 12px/26px "Liberation Sans", Arial, sans-serif; }
.topbar .container { display: flex; height: 27px; border-left: 1px solid #d4d4d4; }
.phone { width: 144.400px; border-right: 1px solid #d4d4d4; display: flex; align-items: center; padding-left: 17px; padding-bottom: 1px; }
.phone svg { margin-right: 6px; }
.user { margin-left: auto; display: flex; align-items: center; width: 117px; border-right: 1px solid #d4d4d4; padding-bottom: 1px; }
.user svg { margin-right: 4px; }
.caret { display: inline-block; border: 4px solid transparent; border-top-color: currentColor; border-bottom: 0; margin-left: 5px; vertical-align: middle; }
.tl { text-align: center; border-right: 1px solid #d4d4d4; }
.t1 { width: 137px; } .t2 { width: 130px; } .t3 { width: 121px; }
.ribbon { position: absolute; left: 288px; top: 0; }
.masthead { height: 100px; display: flex; }
.logo { margin: 17px 72px 0 0; }
.badge { margin-top: 6px; }
.call { margin: 38px 0 0 83px; }
.finder { margin-left: auto; padding-top: 25px; text-align: right; }
.search { display: flex; width: 300px; height: 34px; margin-left: auto; border: 1px solid #bbb; line-height: 32px; }
.search span { flex: 1; text-align: left; padding-left: 12px; color: #777; }
.search b { width: 40px; border-left: 1px solid #bbb; display: grid; place-items: center; }
.finder p { font-size: 11px; color: #777; margin-top: 12px; }
.mainnav { height: 40px; background: #5f5650; color: #fff; }
.mainnav .container { display: grid; grid-template-columns: 98px 177px 144px 140px 190px 94px 179px 118px; height: 40px; line-height: 40px; text-align: center; }
.mainnav a { position: relative; }
.mainnav .on { background: #f00048; }
.navstar { position: absolute; left: 3px; top: 2px; }
.crumbs { height: 66px; display: flex; padding-top: 18px; }
.crumbs i { color: #ccc; }
.c1 { margin: 0 8px 0 10px; }
.c2 { margin: 0 8px 0 5.600px; }
.formhead { height: 43px; border-bottom: 3px solid #f00048; display: flex; justify-content: space-between; }
.formhead > svg { height: 40px; }
.steps { display: flex; gap: 2px; color: #fff; font-weight: 700; white-space: nowrap; }
.steps span { background: #f00048; padding: 10px 15px 0; height: 40px; line-height: 20px; }
.steps b { font-size: 20px; }
.steps .off { background: #f1f3f3; color: #aaa; }
.cols { display: flex; justify-content: space-between; align-items: flex-start; padding-top: 30px; }
.left { width: 750px; }
.card { border: 1px solid #ddd; margin-bottom: 15px; }
.card h3 { height: 39px; background: #f0f0f0; color: #e00000; font-size: 14px; line-height: 38px; padding-left: 15px; }
.body { padding: 15px; min-height: 40px; }
.fields { display: flex; gap: 4.300px; font-size: 12px; }
.fields > div { display: flex; flex-direction: column; }
label { font-weight: 700; font-size: 12px; line-height: 17px; white-space: nowrap; }
.fields label { height: 22px; }
label i { color: #f00; }
.f1 { width: 176px; } .f2 { width: 56px; } .f3 { width: 176.500px; } .f4 { width: 116px; }
.inp, .sel { height: 34px; border: 1px solid #b8b8b8; background: #fff; color: #555; font-size: 12px; line-height: 32px; padding-left: 4px; }
.sel { display: flex; justify-content: space-between; align-items: center; padding: 0 5px 0 8px; border-color: #c4c4c4; }
.sel i { border: 3px solid transparent; border-top: 6px solid #444; border-bottom: 0; }
.trio { display: grid; grid-template-columns: 1fr 1fr 1fr; gap: 4px; }
.tip { position: relative; background: #ebeef1; margin: 30px 0 0; height: 91px; padding: 15px; font-size: 12px; line-height: 17px; color: #444; }
.tip::before { content: ""; position: absolute; left: 20px; top: -6px; border: 6px solid transparent; border-bottom-color: #ebeef1; border-top: 0; }
.tip ul { padding-left: 40px; }
.flight { padding-top: 15px; }
.flight p { margin-bottom: 17px; }
.radio { height: 27px; display: flex; align-items: flex-start; }
.radio i { width: 12px; height: 12px; margin: 4px 8px 0 0; border-radius: 50%; border: 1px solid #aaa; background: linear-gradient(#eee, #ddd); }
.radio .sel-on { background: radial-gradient(circle, #555 0 2.700px, #e4e4e4 3.300px); }
.radio em { color: #f00; }
.tip.two { height: 120px; margin-top: 5px; padding-top: 22px; display: flex; gap: 30px; }
.two > div { width: 329px; }
.two label { display: block; }
.tip small { display: block; font-size: 12px; color: #777; margin-top: 5px; }

/* summary */
.side { width: 360px; height: 640px; border: 1px solid #ddd; }
.row { border-bottom: 1px solid #bbc4c8; padding: 10px 10px 15px 10px; white-space: nowrap; }
.row.first { padding-top: 20px; }
.row.dbl, .row.tight { padding-bottom: 10px; }
.row p { display: flex; justify-content: space-between; }
.row p + p { margin-top: 5px; }
.row .r { justify-content: flex-end; text-align: right; }
.fee { color: #154386; }
.total-line { border-bottom-color: #5b92bd; }
.total { color: #f00020; font-size: 16px; }
.last { border-bottom: 0; }
u { color: #f00; }

/* overlays */
.scroll { width: 15px; background: #f1f1f1; display: flex; flex-direction: column; align-items: center; padding: 5px 0 6px; }
.up { border: 4px solid transparent; border-bottom-color: #888; border-top: 0; }
.thumb { width: 11px; height: 390px; background: #a8a8a8; margin-top: 6px; }
.down { border: 4px solid transparent; border-top-color: #555; border-bottom: 0; margin-top: auto; }
.chat { position: absolute; left: 20px; bottom: 0; width: 250px; height: 33px; background: #c00; color: #fff; border-radius: 4px 4px 0 0; display: flex; justify-content: space-between; align-items: center; padding: 0 8px 0 15px; font: 16px Lato, sans-serif; }
.comodo { position: absolute; left: 1805px; top: 829px; }

/* taskbar */
.taskbar { height: 33px; flex: none; display: flex; gap: 4.500px; padding: 1px 3px 1px 2px; font: 500 13px "Noto Sans", sans-serif; color: #bbb; }
.task { width: 262px; height: 31px; border: 2px solid #3a3a3a; border-radius: 4px; background: #060606; display: flex; align-items: center; gap: 5px; padding-left: 5px; white-space: nowrap; }
.task span { letter-spacing: .15px; }
.task.cur span { letter-spacing: .17px; }
.cur { color: #fff; }
.min { color: #707070; }
.pager { margin: 2px 0 0 auto; width: 56px; height: 27px; border: 1px solid #bbb; background: #3c3c3c; color: #ddd; text-align: center; font-size: 14px; letter-spacing: .6px; line-height: 23px; }
```
